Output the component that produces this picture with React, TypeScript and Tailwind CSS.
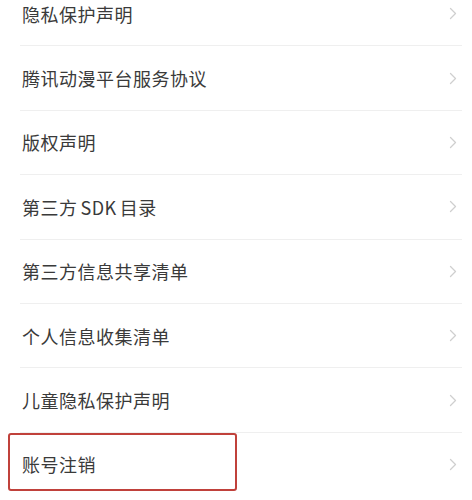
const items = [
  "隐私保护声明",
  "腾讯动漫平台服务协议",
  "版权声明",
  "SDK",
  "第三方信息共享清单",
  "个人信息收集清单",
  "儿童隐私保护声明",
  "账号注销",
];

function Chevron() {
  return (
    <svg width="8" height="13" viewBox="0 0 8 13" fill="none" className="shrink-0">
      <path d="M1.5 1.5L6.5 6.5L1.5 11.5" stroke="#cfcfcf" strokeWidth="1.3" strokeLinecap="round" strokeLinejoin="round" />
    </svg>
  );
}

export default function App() {
  return (
    <div
      className="relative h-[500px] w-[472px] overflow-hidden bg-white"
      style={{ fontFamily: '"Noto Sans CJK SC", "Noto Sans", sans-serif' }}
    >
      <ul className="mt-[-18px]">
        {items.map((label, i) => (
          <li key={label} className="ml-[20px] mr-[10px]">
            <div className="flex h-[63.4px] items-center justify-between pl-[2px] pr-[5px]">
              <span className="text-[18px] leading-none tracking-[0.5px] text-[#3a3a3a]">
                {label === "SDK" ? (
                  <>
                    第三方<span className="mx-[3px]">SDK</span>目录
                  </>
                ) : (
                  label
                )}
              </span>
              <Chevron />
            </div>
            {i < items.length - 1 && <div className="h-px bg-[#efefef]" />}
          </li>
        ))}
      </ul>
      <div className="absolute left-[8px] top-[433px] h-[58px] w-[229px] rounded-[3px] border-2 border-[#c0413b]" />
    </div>
  );
}
